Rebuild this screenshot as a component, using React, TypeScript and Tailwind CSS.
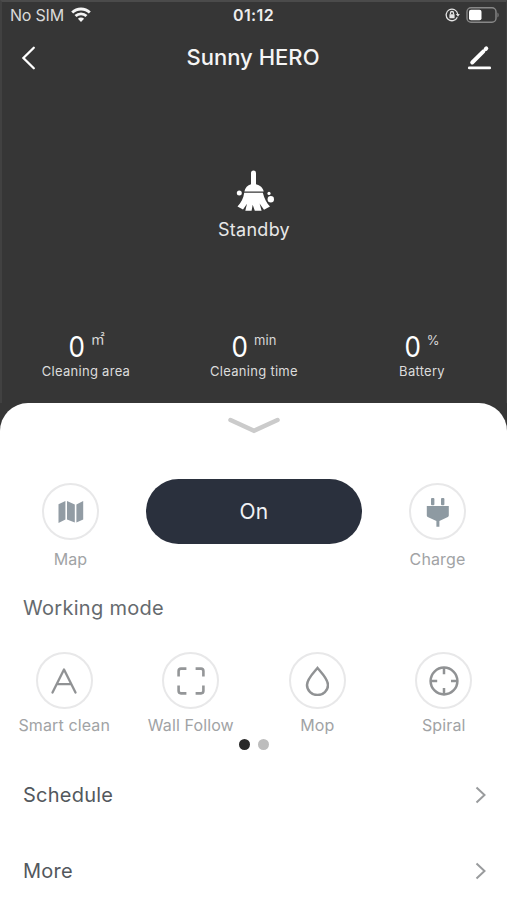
import type { ReactNode } from "react";

function Stat({ value, unit, label }: { value: string; unit: ReactNode; label: string }) {
  return (
    <div className="flex flex-1 flex-col items-center">
      <div className="flex h-[32px] items-start">
        <span className="inline-block origin-center scale-x-[0.93] text-[28px] leading-[32px] text-white">{value}</span>
        <span className="ml-[5px] text-[13px] leading-[18px] tracking-[0.2px] text-[#d8d8d8]">{unit}</span>
      </div>
      <span className="text-[13px] leading-[16px] tracking-[0.28px] text-[#dcdcdc]">{label}</span>
    </div>
  );
}

function RoundButton({ label, children }: { label: string; children: ReactNode }) {
  return (
    <button className="flex flex-col items-center">
      <span className="flex h-[57px] w-[57px] items-center justify-center rounded-full border-2 border-[#e8e8e9]">
        {children}
      </span>
      <span className="mt-[7px] whitespace-nowrap text-[16px] leading-[19px] tracking-[0.12px] text-[#a1a3a5]">{label}</span>
    </button>
  );
}

function Row({ label }: { label: string }) {
  return (
    <div className="flex h-[76px] items-center justify-between pl-[23px] pr-[20px]">
      <span className="text-[20px] tracking-[0.24px] text-[#53585d]">{label}</span>
      <svg width="12" height="18" viewBox="0 0 12 18" fill="none" stroke="#999b9d" strokeWidth="2">
        <path d="M1.5 1.5 9.5 9l-8 7.5" />
      </svg>
    </div>
  );
}

export default function App() {
  return (
    <div className="flex h-[900px] w-[507px] flex-col overflow-hidden bg-[#363636] font-['Inter',sans-serif]">
      <header className="h-[403px] shrink-0 border-l-2 border-r border-t-2 border-[#414141] border-t-[#4b4b4b]">
        <div className="grid h-[26px] grid-cols-3 items-center pl-[8px] pr-[7px]">
          <div className="flex items-center gap-[7px]">
            <span className="text-[16px] tracking-[-0.2px] text-[#dadada]">No SIM</span>
            <svg width="20" height="16" viewBox="0 0 20 16" fill="none" stroke="#f4f4f4" strokeWidth="2.8">
              <path d="M1.2 5.6a12.6 12.6 0 0 1 17.6 0" />
              <path d="M4.5 9.1a7.9 7.9 0 0 1 11 0" />
              <path d="m6.9 11.7 3.1 3.3 3.1-3.3a4.4 4.4 0 0 0-6.2 0Z" fill="#f4f4f4" stroke="none" />
            </svg>
          </div>
          <span className="-ml-[2px] text-center text-[16px] font-semibold tracking-[0.4px] text-[#eeeeee]">01:12</span>
          <div className="flex items-center justify-end gap-[6px]">
            <svg width="15" height="14" viewBox="0 0 15 14" fill="none" stroke="#e5e5e5" strokeWidth="1.3">
              <path d="M12.3 9.2A5.8 5.8 0 1 1 12.7 6" />
              <path d="m10.8 6 2.2 2.8L14.8 6Z" fill="#e5e5e5" stroke="none" />
              <rect x="4.4" y="6.2" width="5.2" height="4.1" rx=".5" fill="#e5e5e5" stroke="none" />
              <path d="M5.5 6.5V5a1.5 1.5 0 0 1 3 0v1.5" />
            </svg>
            <svg width="33" height="16" viewBox="0 0 33 16" fill="none">
              <rect x="1" y=".8" width="29" height="14.4" rx="4" stroke="#888888" strokeWidth="1.4" />
              <rect x="3" y="2.8" width="12.5" height="10.4" rx="2" fill="#ffffff" />
              <path d="M31.5 5.5c1.5.8 1.5 4.2 0 5Z" fill="#888888" />
            </svg>
          </div>
        </div>

        <div className="grid h-[59px] grid-cols-[1fr_auto_1fr] items-center pl-[19px] pr-[14px]">
          <svg width="25" height="24" viewBox="0 0 25 24" fill="none" stroke="#ffffff" strokeWidth="2.3" strokeLinecap="round">
            <path d="M12.8 1.7 2.4 12l10.4 10.3" />
          </svg>
          <h1 className="mr-[7px] text-[22px] font-medium tracking-[0.02px] text-[#f5f5f5]">Sunny HERO</h1>
          <svg className="justify-self-end" width="25" height="26" viewBox="0 0 25 26" fill="none" stroke="#ffffff" strokeLinecap="round">
            <path d="M2.3 22.9h20.4" strokeWidth="2.8" />
            <path d="M5.2 17.5 16.4 6.3" strokeWidth="3.9" />
            <path d="m18.7 4 .6-.6" strokeWidth="4" />
          </svg>
        </div>

        <div className="mt-[82px] flex flex-col items-center">
          <svg width="40" height="44" viewBox="0 0 40 44" fill="#ffffff">
            <path d="M17 3.9a2.5 2.5 0 0 1 5 0v11.4c4 .8 7 3.5 7.7 7.2H10.4c.7-3.7 3.2-6.4 6.6-7.2Z" />
            <path d="M10.2 23.7h18.6c1.5 6 4.2 10.8 7.2 13.9l-6 3.1-4.4-6.1 2 7.2h-6.8l-2.1-6-1.1 6h-6.3l1.7-7.1-4 5.7-5.5-2.8c3.6-3.9 6-8.4 6.7-13.9Z" />
            <circle cx="5.3" cy="24" r="2.5" />
            <circle cx="35" cy="24.4" r="1.6" />
            <circle cx="36.8" cy="30.2" r="3.2" />
          </svg>
          <span className="mt-[5px] text-[18px] leading-[24px] tracking-[0.28px] text-[#e8e8e8]">Standby</span>
        </div>

        <div className="mt-[89px] flex">
          <Stat
            value="0"
            unit={<span className="block w-[13px] font-['Noto_Sans_CJK_SC',sans-serif] text-[14px] leading-[14px] tracking-normal">㎡</span>}
            label="Cleaning area"
          />
          <Stat value="0" unit="min" label="Cleaning time" />
          <Stat value="0" unit="%" label="Battery" />
        </div>
      </header>

      <main className="flex-1 rounded-t-[28px] bg-white">
        <div className="flex h-[76px] justify-center pt-[14px]">
          <svg width="52" height="17" viewBox="0 0 52 17" fill="none" stroke="#cbcbcb" strokeWidth="4.5" strokeLinecap="round">
            <path d="m2.5 3 23.5 10.8L49.5 3" />
          </svg>
        </div>

        <div className="flex items-start justify-between pl-[42px] pr-[41px]">
          <div className="mt-[4px] [&_button>span:last-child]:mt-[10px]">
            <RoundButton label="Map">
              <svg width="26" height="24" viewBox="0 0 26 24" fill="#929ca4">
                <path d="M.5 4.3 7.4.9v18.6L.5 23ZM9 1.1l7.8 3.5v18L9 19.5ZM18.4 4.6l6.8-3.7v18.6l-6.8 3.1Z" />
              </svg>
            </RoundButton>
          </div>
          <button className="h-[65px] w-[216px] rounded-full bg-[#2a303d] text-[21px] tracking-[0.3px] text-[#f0f2f5]">On</button>
          <div className="mt-[4px] [&_button>span:last-child]:mt-[10px]">
            <RoundButton label="Charge">
              <svg width="24" height="30" viewBox="0 0 24 30" fill="#8e9aa2">
                <rect x="5" y="1" width="3.4" height="7.2" rx="1" />
                <rect x="15" y="1" width="3.4" height="7.2" rx="1" />
                <path d="M.8 9h22v9.2c0 1.1-.6 1.6-1.5 2L13.4 24v5.8h-3V24L2.3 20.2c-1-.4-1.5-.9-1.5-2Z" />
              </svg>
            </RoundButton>
          </div>
        </div>

        <h2 className="mt-[25px] pl-[23px] text-[20px] leading-[28px] tracking-[0.3px] text-[#656a6e]">Working mode</h2>

        <div className="mt-[30px] grid grid-cols-4 justify-items-center pl-px">
          <RoundButton label="Smart clean">
            <svg width="28" height="28" viewBox="0 0 28 28" fill="none" stroke="#909294" strokeWidth="2.3">
              <path d="M2.5 25.5 14 2.5l11.5 23M7 17.2h14" strokeLinecap="round" strokeLinejoin="round" />
            </svg>
          </RoundButton>
          <RoundButton label="Wall Follow">
            <svg width="28" height="28" viewBox="0 0 28 28" fill="none" stroke="#949698" strokeWidth="2.6">
              <path d="M9.4 1.6H4A2.5 2.5 0 0 0 1.6 4v5.4M18.6 1.6H24A2.5 2.5 0 0 1 26.4 4v5.4M9.4 26.4H4A2.5 2.5 0 0 1 1.6 24v-5.4M18.6 26.4H24a2.5 2.5 0 0 0 2.4-2.4v-5.4" />
            </svg>
          </RoundButton>
          <RoundButton label="Mop">
            <svg width="24" height="30" viewBox="0 0 24 30" fill="none" stroke="#909294" strokeWidth="2.5">
              <path d="M12.5 2C9 6.3 2 13 2 19a10.5 10 0 0 0 21 0C23 13 16 6.3 12.5 2Z" />
            </svg>
          </RoundButton>
          <RoundButton label="Spiral">
            <svg width="30" height="30" viewBox="0 0 30 30" fill="none" stroke="#909294" strokeWidth="2.5">
              <circle cx="15" cy="15" r="13.4" />
              <path d="M15 2v6.2M15 22v6M2 15h6.2M22 15h6" />
            </svg>
          </RoundButton>
        </div>

        <div className="mt-[4px] flex justify-center gap-[8px]">
          <span className="h-[11px] w-[11px] rounded-full bg-[#292929]" />
          <span className="h-[11px] w-[11px] rounded-full bg-[#bdbdbd]" />
        </div>

        <div className="mt-[7px]">
          <Row label="Schedule" />
          <Row label="More" />
        </div>
      </main>
    </div>
  );
}
